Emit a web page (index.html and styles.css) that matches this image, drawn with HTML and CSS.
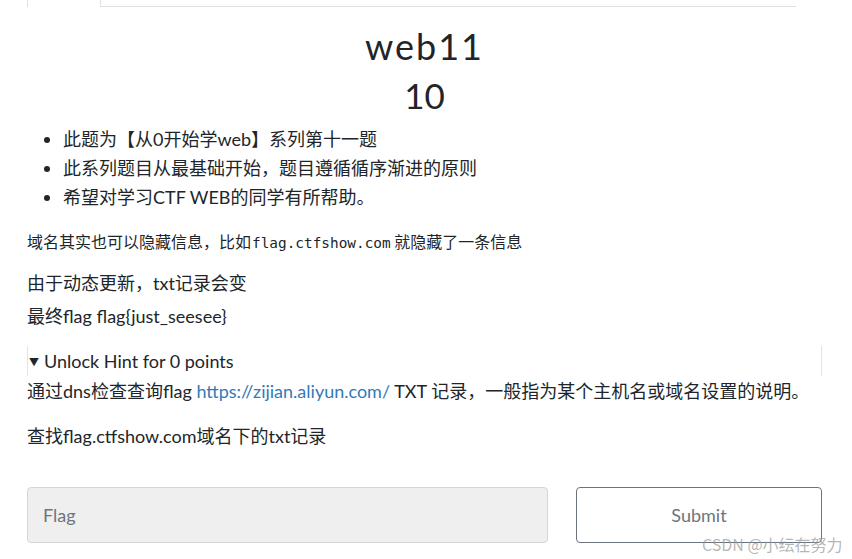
FILE: index.html
```html
<!DOCTYPE html>
<html lang="zh-CN">
<head>
    <meta charset="UTF-8">
    <meta name="viewport" content="width=device-width, initial-scale=1.0">
    <title>web11</title>
    <link rel="stylesheet" href="styles.css">
</head>
<body>
    <div class="container">
        <div class="tabs">
            <div class="tab-active"></div>
            <div class="tab-rest"></div>
        </div>

        <h1 class="challenge-name">web11</h1>
        <h2 class="challenge-value">10</h2>

        <ul class="intro">
            <li>此题为【从0开始学web】系列第十一题</li>
            <li>此系列题目从最基础开始，题目遵循循序渐进的原则</li>
            <li>希望对学习CTF WEB的同学有所帮助。</li>
        </ul>

        <p class="note">域名其实也可以隐藏信息，比如<code>flag.ctfshow.com</code> 就隐藏了一条信息</p>

        <p class="desc">由于动态更新，txt记录会变<br>最终flag flag{just_seesee}</p>

        <details class="hint" open>
            <summary>Unlock Hint for 0 points</summary>
            <p class="hint-text">通过dns检查查询flag <a href="#">https://zijian.aliyun.com/</a> TXT 记录，一般指为某个主机名或域名设置的说明。</p>
            <p class="hint-text second">查找flag.ctfshow.com域名下的txt记录</p>
        </details>

        <form class="submit-row">
            <input type="text" class="flag-input" placeholder="Flag">
            <button type="submit" class="submit-btn">Submit</button>
        </form>
    </div>

    <div class="watermark">CSDN @小纭在努力</div>
</body>
</html>
```

FILE: styles.css
```css
/* Reset básico */
* {
    margin: 0;
    padding: 0;
    box-sizing: border-box;
}

body {
    font-family: 'Lato', 'Noto Sans CJK SC', sans-serif;
    color: #212529;
    background-color: #fff;
    width: 852px;
    height: 559px;
    overflow: hidden;
    position: relative;
}

.container {
    padding: 0 30px 0 27px;
}

/* Abas do topo */
.tabs {
    display: flex;
    height: 7px;
}

.tab-active {
    width: 74px;
    border-left: 1px solid #dee2e6;
    border-right: 1px solid #dee2e6;
}

.tab-rest {
    width: 695px;
    border-bottom: 1px solid #dee2e6;
}

.challenge-name {
    text-align: center;
    font-size: 36px;
    font-weight: 400;
    line-height: 48px;
    letter-spacing: 2px;
    margin-top: 15px;
}

.challenge-value {
    text-align: center;
    font-size: 35px;
    font-weight: 400;
    line-height: 48px;
    margin-top: 1px;
}

.intro {
    font-size: 18px;
    line-height: 29px;
    margin-top: 6px;
    padding-left: 36px;
}

.note {
    font-size: 16px;
    line-height: 24px;
    margin-top: 17px;
    font-family: 'Noto Sans CJK SC', sans-serif;
}

.note code {
    font-family: 'DejaVu Sans Mono', monospace;
    font-size: 14.4px;
    margin-left: 1px;
}

.desc {
    font-size: 18px;
    line-height: 33px;
    margin-top: 12px;
}

.hint {
    margin-top: 13px;
}

.hint summary {
    font-size: 18px;
    line-height: 30px;
    height: 30px;
    border-left: 1px solid #e4e4e4;
    border-right: 1px solid #e4e4e4;
    list-style: none;
    cursor: pointer;
}

.hint summary::before {
    content: "\25BC";
    font-size: 10px;
    display: inline-block;
    vertical-align: 2px;
    width: 15px;
    margin-left: 1px;
}

.hint-text {
    font-size: 18px;
    line-height: 30px;
}

.hint-text.second {
    margin-top: 15px;
}

.hint-text a {
    color: #337ab7;
    text-decoration: none;
}

/* Formulário */
.submit-row {
    display: flex;
    gap: 28px;
    margin-top: 36px;
}

.flag-input {
    width: 521px;
    height: 56px;
    padding: 0 15px;
    background-color: #efefef;
    border: 1px solid #d6d6d6;
    border-radius: 4px;
    font-family: 'Lato', sans-serif;
    font-size: 18px;
    color: #495057;
}

.flag-input::placeholder {
    color: #6c757d;
}

.submit-btn {
    width: 246px;
    height: 56px;
    background-color: #fff;
    border: 1px solid #6c757d;
    border-radius: 4px;
    font-family: 'Lato', sans-serif;
    font-size: 18px;
    color: #6c757d;
    cursor: pointer;
}

.watermark {
    position: absolute;
    left: 702px;
    top: 533px;
    font-size: 16px;
    line-height: 22px;
    color: rgba(150, 150, 150, 0.7);
    font-family: 'Noto Sans CJK SC', sans-serif;
    white-space: nowrap;
}
```
